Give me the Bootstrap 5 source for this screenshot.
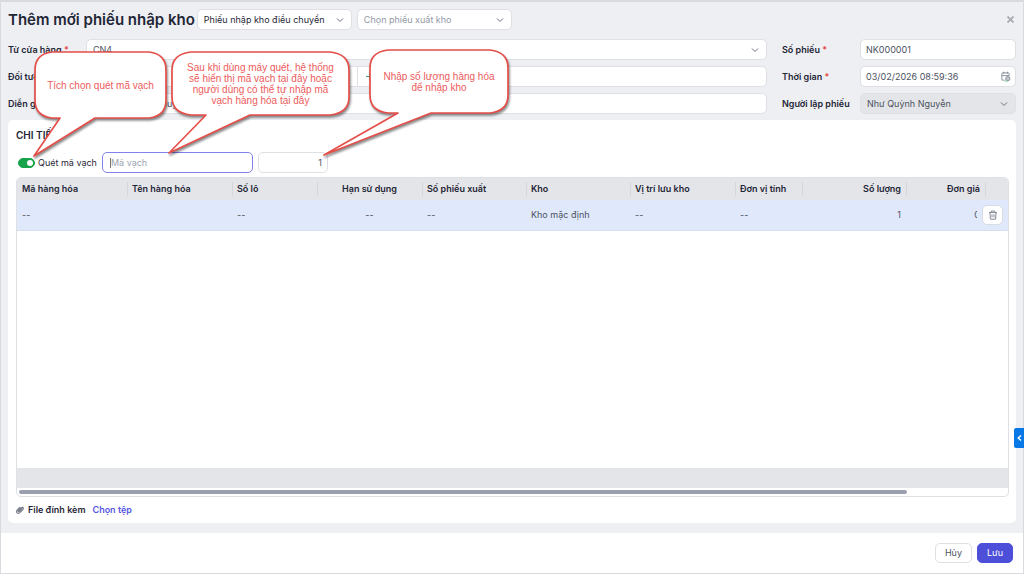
<!DOCTYPE html>
<html lang="vi">
<head>
<meta charset="utf-8">
<meta name="viewport" content="width=device-width, initial-scale=1">
<title>Thêm mới phiếu nhập kho</title>
<link rel="stylesheet" href="https://cdn.jsdelivr.net/npm/bootstrap@5.3.0/dist/css/bootstrap.min.css">
<style>
:root { --page: #eeeff3; --line: #dfe0e4; --ink: #1f2636; --soft: #4b5260; --brand: #4d4fd9; --call: #e54f4a; }
body { font-family: Inter, "Noto Sans", sans-serif; font-size: 9px; line-height: 12px; color: var(--ink); background: var(--page); }
.screen { border: 1px solid #d9dadf; border-top-width: 2px; }
.page-head { padding: 7px 9px 0 7px; gap: 2px; }
.page-head h1 { font-size: 15px; line-height: 21px; font-weight: 600; margin: 0; }
.kinds { gap: 5px; }
.field { height: 21px; min-height: 0; padding: 0 5px; font-size: 9px; line-height: 12px; color: var(--soft); border: 1px solid var(--line); border-radius: 5px; background-color: #fff; }
select.field { padding-left: 6px; padding-right: 18px; background-image: url("data:image/svg+xml,%3Csvg xmlns='http://www.w3.org/2000/svg' viewBox='0 0 16 16'%3E%3Cpath fill='none' stroke='%236b7280' stroke-width='2' d='M2 5l6 6 6-6'/%3E%3C/svg%3E"); background-size: 8px 8px; background-position: right 7px center; }
.field:disabled { background-color: #e4e5e9; opacity: 1; }
.field::placeholder { color: #9da3b0; opacity: 1; }
.kind { width: 155px; color: var(--ink); }
.kind.field-muted { color: #9298a5; }
.icon-btn { border: 0; padding: 0; background: none; line-height: 0; }
.form-zone { padding: 9px 7px 6px; gap: 15px; }
.form-side { width: 234px; }
.form-rows { gap: 6px; }
.form-rows label { width: 78px; flex: none; font-weight: 600; white-space: nowrap; }
.req { color: #e5483f; }
.input-group > .party { flex: 0 0 40%; }
.input-group > .plus { padding: 0 8px; line-height: 0; }
.memo { text-decoration: underline wavy #e66 1px; }
.cal { right: 5px; }
.detail { margin: 0 7px 10px; padding: 7px 7px 7px 8px; border-radius: 5px; background: #fff; }
.detail h2 { font-size: 10px; line-height: 16px; font-weight: 600; margin: 0 0 9px; }
.scan { gap: 5px; margin-bottom: 4px; }
.scan .form-switch { gap: 3px; min-height: 0; }
.scan .form-check-input { width: 17px; height: 10px; margin: 0 0 0 2px; border-color: #16a34a; background-color: #16a34a; float: none; }
.scan .code { width: 151px; border-color: #8183ea; padding-left: 8px; background-image: linear-gradient(#777, #777); background-size: 1px 10px; background-position: 7px center; background-repeat: no-repeat; }
.scan .count { width: 70px; }
.grid-box { border: 1px solid var(--line); border-radius: 5px; overflow: hidden; }
.items { table-layout: fixed; width: 100%; white-space: nowrap; }
.items th { height: 22px; padding: 0 5px; font-weight: 600; background: #e4e5e9; position: relative; }
.items th + th::before { content: ""; position: absolute; left: 0; top: 4px; bottom: 4px; border-left: 1px solid #d5d7db; }
.items td { height: 30px; padding: 0 5px; color: var(--soft); background: #e0e8fb; border-bottom: 1px solid #d8deec; overflow: hidden; }
.items td.act { position: sticky; right: 0; padding: 0; overflow: visible; }
.items td.act::before { content: ""; position: absolute; top: 0; bottom: 0; left: -7px; width: 7px; background: #e0e8fb; }
.trash { width: 21px; height: 20px; border: 1px solid #d9dbe2; border-radius: 5px; background: #fff; margin-left: -2px; display: grid; place-items: center; padding: 0; position: relative; }
.sum-row { height: 20px; background: #e4e5e9; }
.track { height: 8px; padding: 2px; }
.thumb { height: 4px; width: 90%; border-radius: 2px; background: #9ca0ae; }
.attach { gap: 4px; padding-top: 7px; font-weight: 600; }
.attach a { color: #5557e2; text-decoration: none; margin-left: 3px; }
.page-foot { background: #fff; padding: 10px; gap: 5px; }
.page-foot button { height: 20px; padding: 0 9px; font-size: 9px; line-height: 12px; border-radius: 5px; }
.cancel { border: 1px solid var(--line); background: #fff; color: var(--soft); }
.save { border: 1px solid var(--brand); background: var(--brand); color: #fff; }
.side-tab { position: absolute; right: -1px; top: 426px; width: 10px; height: 20px; border: 0; padding: 0; background: #0878e6; border-radius: 2px 0 0 2px; display: grid; place-items: center; }
.note { position: absolute; display: flex; align-items: center; justify-content: center; text-align: center; font: 10px/11px "Liberation Sans", Arial, sans-serif; color: #ec5b5c; }
.note svg { position: absolute; left: 0; top: 0; overflow: visible; filter: drop-shadow(1px 2px 1px rgba(0,0,0,.45)); }
.note path { fill: #fff; stroke: var(--call); stroke-width: 1.7; stroke-linejoin: round; }
.note span { position: relative; white-space: nowrap; }
.note-a { left: 34px; top: 50px; width: 131px; height: 66px; }
.note-b { left: 171px; top: 50px; width: 177px; height: 63px; }
.note-c { left: 369px; top: 48px; width: 138px; height: 63px; }
</style>
<script src="https://cdn.jsdelivr.net/npm/bootstrap@5.3.0/dist/js/bootstrap.bundle.min.js"></script>
</head>
<body>
<main class="screen position-relative d-flex flex-column min-vh-100">
  <header class="page-head d-flex align-items-center">
    <h1>Thêm mới phiếu nhập kho</h1>
    <div class="kinds d-flex">
      <select class="form-select field kind" aria-label="Loại phiếu"><option>Phiếu nhập kho điều chuyển</option></select>
      <select class="form-select field kind field-muted" aria-label="Phiếu xuất kho"><option>Chọn phiếu xuất kho</option></select>
    </div>
    <button class="icon-btn ms-auto" type="button" aria-label="Đóng"><svg width="7" height="7" viewBox="0 0 7 7"><path d="M.5.5l6 6M6.5.5l-6 6" stroke="#a5a8af" stroke-width="1.7"/></svg></button>
  </header>

  <section class="form-zone d-flex">
    <div class="form-rows flex-grow-1 d-flex flex-column">
      <div class="d-flex align-items-center"><label for="store">Từ cửa hàng <span class="req">*</span></label>
        <select id="store" class="form-select field"><option>CN4</option></select></div>
      <div class="d-flex align-items-center"><label for="party">Đối tượng</label>
        <div class="input-group flex-nowrap">
          <input id="party" class="form-control field party" type="text">
          <button class="field plus" type="button" aria-label="Thêm đối tượng"><svg width="7" height="7" viewBox="0 0 7 7"><path d="M3.5 0v7M0 3.5h7" stroke="#35a466"/></svg></button>
          <input class="form-control field" type="text" aria-label="Tên đối tượng">
        </div></div>
      <div class="d-flex align-items-center"><label for="memo">Diễn giải</label>
        <input id="memo" class="form-control field memo" type="text" value="Nhập kho điều chuy" spellcheck="false"></div>
    </div>
    <div class="form-side form-rows d-flex flex-column">
      <div class="d-flex align-items-center"><label for="num">Số phiếu <span class="req">*</span></label>
        <input id="num" class="form-control field" type="text" value="NK000001"></div>
      <div class="d-flex align-items-center position-relative"><label for="time">Thời gian <span class="req">*</span></label>
        <input id="time" class="form-control field" type="text" value="03/02/2026 08:59:36">
        <svg class="cal position-absolute" width="11" height="11" viewBox="0 0 12 12" fill="none" stroke="#858b98"><path d="M10 5V3Q10 2 9 2H3Q2 2 2 3v6q0 1 1 1h2M4 .8v2.4M8 .8v2.4M2 5h8"/><circle cx="8.5" cy="8.3" r="2.3" fill="#c3c7ce"/><path d="M5 11h4" stroke="#79c596"/></svg></div>
      <div class="d-flex align-items-center"><label for="maker">Người lập phiếu</label>
        <select id="maker" class="form-select field" disabled><option>Như Quỳnh Nguyễn</option></select></div>
    </div>
  </section>

  <section class="detail flex-grow-1 d-flex flex-column">
    <h2>CHI TIẾT</h2>
    <div class="scan d-flex align-items-center">
      <div class="form-check form-switch d-flex align-items-center p-0 m-0">
        <input class="form-check-input" type="checkbox" role="switch" id="scan" checked><label for="scan">Quét mã vạch</label>
      </div>
      <input class="form-control field code" type="text" placeholder="Mã vạch" aria-label="Mã vạch">
      <input class="form-control field count text-end" type="text" value="1" aria-label="Số lượng quét">
    </div>
    <div class="grid-box flex-grow-1 d-flex flex-column">
      <table class="items">
        <colgroup><col style="width:110px"><col style="width:105px"><col style="width:85px"><col style="width:105px"><col style="width:104px"><col style="width:104px"><col style="width:105px"><col style="width:67px"><col style="width:104px"><col style="width:79px"><col style="width:24px"></colgroup>
        <thead><tr><th>Mã hàng hóa</th><th>Tên hàng hóa</th><th>Số lô</th><th class="text-center">Hạn sử dụng</th><th>Số phiếu xuất</th><th>Kho</th><th>Vị trí lưu kho</th><th>Đơn vị tính</th><th class="text-end">Số lượng</th><th class="text-end">Đơn giá</th><th></th></tr></thead>
        <tbody><tr><td>--</td><td></td><td>--</td><td class="text-center">--</td><td>--</td><td>Kho mặc định</td><td>--</td><td>--</td><td class="text-end">1</td><td class="text-end">0</td>
          <td class="act"><button class="trash" type="button" aria-label="Xóa dòng"><svg width="10" height="10" viewBox="0 0 10 10" fill="none" stroke="#858b97"><path d="M1 2.5h8M3.3 2.5V1h3.4v1.5M2 2.5l.4 6.7h5.2L8 2.5M4 4.3v3M6 4.3v3"/></svg></button></td></tr></tbody>
      </table>
      <div class="flex-grow-1"></div>
      <div class="sum-row"></div>
      <div class="track"><div class="thumb"></div></div>
    </div>
    <div class="attach d-flex align-items-center">
      <svg width="8" height="8" viewBox="0 0 9 9" fill="none" stroke="#7b808d" stroke-width="1.3" stroke-linecap="round"><path d="M6.8 3L3.6 6.2Q2.8 6.8 2.4 6.2T2.8 5L5.9 2Q7 1 7.9 1.8T7.7 4L4.4 7.4Q2.6 8.9 1.2 7.7T1.4 4.5L4.3 1.7"/></svg>
      <span>File đính kèm</span><a href="#">Chọn tệp</a>
    </div>
  </section>

  <footer class="page-foot d-flex justify-content-end">
    <button class="cancel" type="button">Hủy</button>
    <button class="save" type="button">Lưu</button>
  </footer>

  <button class="side-tab" type="button" aria-label="Mở bảng bên"><svg width="5" height="6" viewBox="0 0 5 6"><path d="M4 .5L1.2 3 4 5.5" fill="none" stroke="#fff" stroke-width="1.4"/></svg></button>

  <div class="note note-a"><svg width="131" height="66"><path d="M17 0H114Q131 2 131 18V48Q131 64 114 66H60L-1 104 25 66H17Q0 64 0 48V18Q0 2 17 0Z"/></svg><span>Tích chọn quét mã vạch</span></div>
  <div class="note note-b"><svg width="177" height="63"><path d="M19 0H158Q177 2 177 18V45Q177 61 158 63H78L-3 101 34 63H19Q0 61 0 45V18Q0 2 19 0Z"/></svg><span>Sau khi dùng máy quét, hệ thống<br>sẽ hiển thị mã vạch tại đây hoặc<br>người dùng có thể tự nhập mã<br>vạch hàng hóa tại đây</span></div>
  <div class="note note-c"><svg width="138" height="63"><path d="M18 0H120Q138 2 138 18V45Q138 61 120 63H61L-46 105 28 63H18Q0 61 0 45V18Q0 2 18 0Z"/></svg><span>Nhập số lượng hàng hóa<br>để nhập kho</span></div>
</main>
</body>
</html>
